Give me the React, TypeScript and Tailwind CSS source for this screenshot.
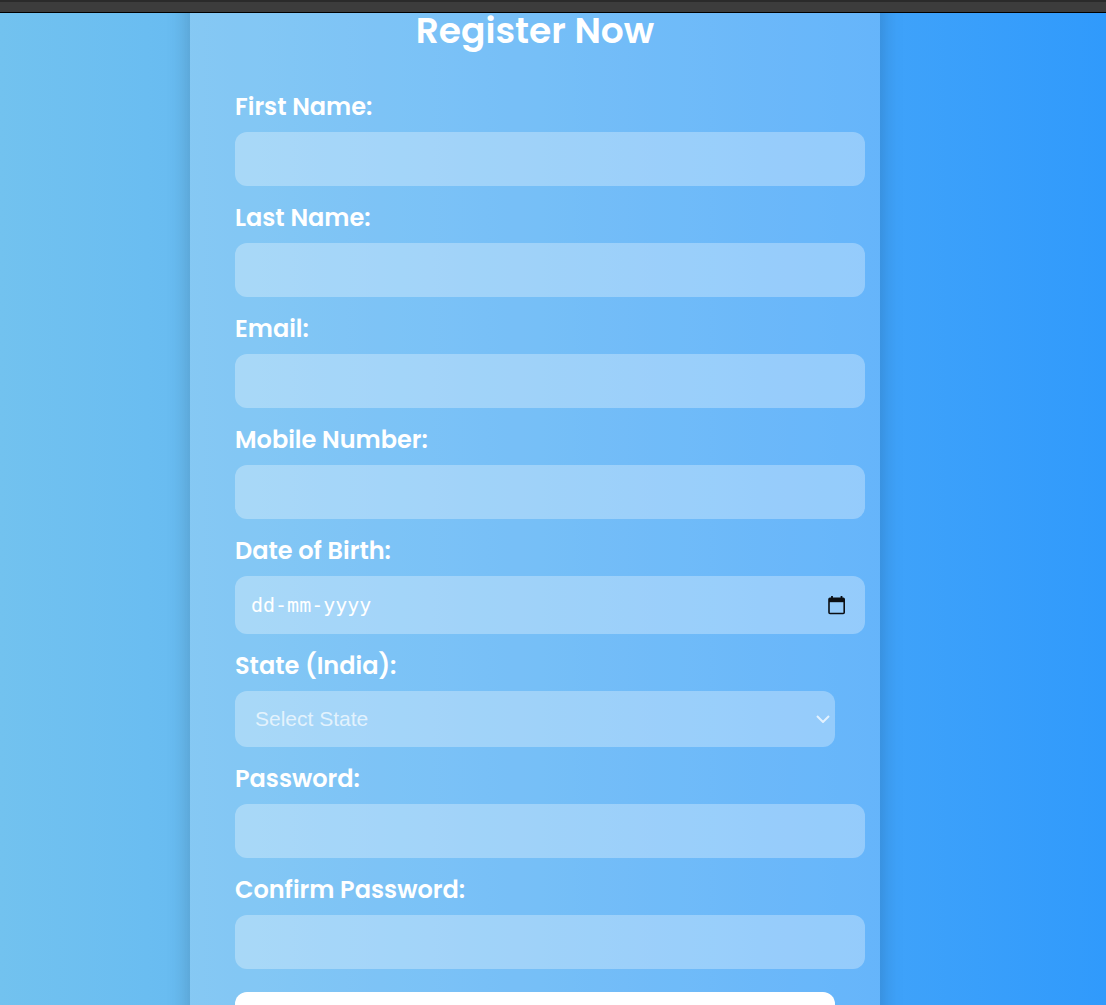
import type { ReactNode } from "react";

const fieldStyle =
  "block w-[calc(100%+30px)] rounded-xl bg-white/30 px-4 text-xl text-white outline-none placeholder:text-white";

function Field({ id, label, children }: { id: string; label: string; children: ReactNode }) {
  return (
    <div>
      <label
        htmlFor={id}
        className="block pt-[13px] pb-[7px] font-['Poppins','Inter',sans-serif] text-2xl leading-[37px] font-semibold text-white"
      >
        {label}
      </label>
      {children}
    </div>
  );
}

function CalendarIcon() {
  return (
    <svg viewBox="0 0 18 20" className="h-5 w-[18px]" fill="none" aria-hidden="true">
      <path d="M5 1v2.5M14.5 1v2.5" stroke="#0b0f14" strokeWidth="1.8" />
      <rect x="2" y="3.2" width="15.2" height="15.3" rx="1" stroke="#0b0f14" strokeWidth="1.6" />
      <path d="M2 3h15v4.2H2z" fill="#0b0f14" />
    </svg>
  );
}

export default function App() {
  return (
    <div className="flex h-screen flex-col overflow-hidden">
      <header className="h-[13px] shrink-0 border-t-2 border-b border-t-[#2a2a2a] border-b-black bg-[#3c3c3c]" />
      <main className="min-h-0 flex-1 overflow-x-hidden overflow-y-auto bg-linear-to-r from-[#72c2ef] to-[#309afc] pr-9 [scrollbar-width:none]">
        <form
          className="mx-auto -mt-16 w-full max-w-[690px] bg-white/20 px-[45px] pt-16 pb-12 shadow-[0_0_22px_rgba(0,0,0,0.2)]"
          onSubmit={(event) => event.preventDefault()}
        >
          <h1 className="pb-[26px] text-center font-['Poppins','Inter',sans-serif] text-4xl leading-9 font-semibold text-white">
            Register Now
          </h1>
          <Field id="first-name" label="First Name:">
            <input id="first-name" type="text" className={`${fieldStyle} h-[54px]`} />
          </Field>
          <Field id="last-name" label="Last Name:">
            <input id="last-name" type="text" className={`${fieldStyle} h-[54px]`} />
          </Field>
          <Field id="email" label="Email:">
            <input id="email" type="email" className={`${fieldStyle} h-[54px]`} />
          </Field>
          <Field id="mobile" label="Mobile Number:">
            <input id="mobile" type="tel" className={`${fieldStyle} h-[54px]`} />
          </Field>
          <Field id="birth" label="Date of Birth:">
            <div className={`${fieldStyle} flex h-[58px] items-center`}>
              <input
                id="birth"
                type="text"
                inputMode="numeric"
                placeholder="dd-mm-yyyy"
                className="min-w-0 flex-1 bg-transparent font-['DejaVu_Sans_Mono',monospace] text-xl text-white outline-none placeholder:text-white"
              />
              <button type="button" aria-label="Open calendar" className="mr-1">
                <CalendarIcon />
              </button>
            </div>
          </Field>
          <Field id="state" label="State (India):">
            <div className="relative">
              <select
                id="state"
                defaultValue=""
                className="block h-14 w-full appearance-none rounded-xl bg-white/30 px-5 font-['Liberation_Sans',sans-serif] text-[21px] text-white/70 outline-none"
              >
                <option value="">Select State</option>
              </select>
              <svg
                viewBox="0 0 14 8"
                className="pointer-events-none absolute top-6 right-[5px] h-2 w-3.5"
                fill="none"
                aria-hidden="true"
              >
                <path d="M1 1l6 6 6-6" stroke="white" strokeOpacity="0.75" strokeWidth="2" />
              </svg>
            </div>
          </Field>
          <Field id="password" label="Password:">
            <input id="password" type="password" className={`${fieldStyle} h-[54px]`} />
          </Field>
          <Field id="confirm-password" label="Confirm Password:">
            <input id="confirm-password" type="password" className={`${fieldStyle} h-[54px]`} />
          </Field>
          <button type="submit" aria-label="Register" className="mt-[23px] block h-14 w-full rounded-xl bg-white" />
        </form>
      </main>
    </div>
  );
}
